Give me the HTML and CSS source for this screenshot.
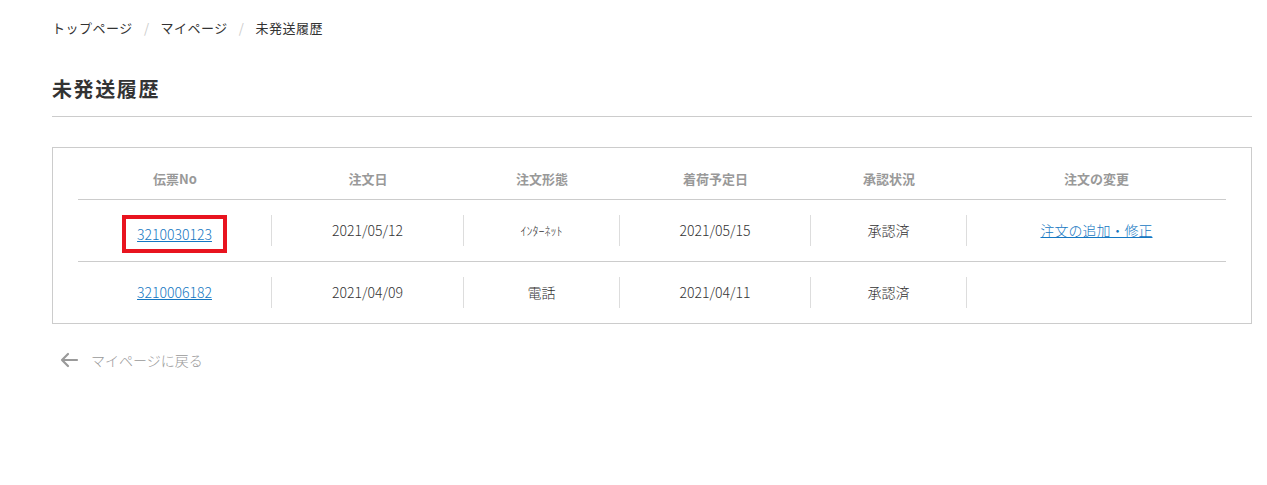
FILE: index.html
```html
<!DOCTYPE html>
<html lang="ja">
  <head>
    <meta charset="UTF-8" />
    <meta name="viewport" content="width=device-width, initial-scale=1.0" />
    <title>未発送履歴</title>
    <link rel="stylesheet" href="styles.css">
  </head>
  <body>
    <div class="container">
      <nav class="breadcrumb">
        <a href="#">トップページ</a>
        <span class="sep">/</span>
        <a href="#">マイページ</a>
        <span class="sep">/</span>
        <span class="current">未発送履歴</span>
      </nav>

      <h1 class="page-title">未発送履歴</h1>

      <div class="table-box">
        <table class="history">
          <thead>
            <tr>
              <th class="c1">伝票No</th>
              <th class="c2">注文日</th>
              <th class="c3">注文形態</th>
              <th class="c4">着荷予定日</th>
              <th class="c5">承認状況</th>
              <th class="c6">注文の変更</th>
            </tr>
          </thead>
          <tbody>
            <tr>
              <td><div class="cell"><a href="#" class="link highlight">3210030123</a></div></td>
              <td><div class="cell">2021/05/12</div></td>
              <td><div class="cell narrow">ｲﾝﾀｰﾈｯﾄ</div></td>
              <td><div class="cell">2021/05/15</div></td>
              <td><div class="cell">承認済</div></td>
              <td><div class="cell last"><a href="#" class="link">注文の追加・修正</a></div></td>
            </tr>
            <tr>
              <td><div class="cell"><a href="#" class="link">3210006182</a></div></td>
              <td><div class="cell">2021/04/09</div></td>
              <td><div class="cell">電話</div></td>
              <td><div class="cell">2021/04/11</div></td>
              <td><div class="cell">承認済</div></td>
              <td><div class="cell last"></div></td>
            </tr>
          </tbody>
        </table>
      </div>

      <a href="#" class="back">
        <svg width="20" height="16" viewBox="0 0 20 16" aria-hidden="true">
          <path d="M18 8H3M9 2L3 8l6 6" fill="none" stroke="#9a9a9a" stroke-width="2.2" stroke-linecap="round" stroke-linejoin="round"/>
        </svg>
        <span>マイページに戻る</span>
      </a>
    </div>
  </body>
</html>
```

FILE: styles.css
```css
body {
  font-family: "Noto Sans CJK JP", "Noto Sans", sans-serif;
  background-color: #ffffff;
  color: #333333;
  margin: 0;
  padding: 0;
}

.container {
  width: 1200px;
  margin: 0 0 0 52px;
  padding-top: 17px;
}

.breadcrumb {
  font-size: 13px;
  line-height: 22px;
  letter-spacing: 0.04em;
  display: flex;
  align-items: center;
  gap: 11px;
}

.breadcrumb a {
  color: #333333;
  text-decoration: none;
}

.breadcrumb .sep {
  color: #cccccc;
}

.page-title {
  font-size: 20px;
  font-weight: bold;
  letter-spacing: 0.08em;
  color: #333333;
  margin: 38px 0 0;
  line-height: 24px;
  padding-bottom: 15px;
  border-bottom: 1px solid #cccccc;
}

.table-box {
  margin-top: 30px;
  border: 1px solid #cccccc;
  padding: 10px 25px 0 25px;
}

.history {
  width: 100%;
  border-collapse: collapse;
  font-size: 13px;
}

.history th {
  color: #999999;
  font-weight: bold;
  line-height: 18px;
  padding: 12px 0 11px;
  border-bottom: 1px solid #cccccc;
  text-align: center;
}

.c1 { width: 194px; }
.c2 { width: 192px; }
.c3 { width: 156px; }
.c4 { width: 191px; }
.c5 { width: 156px; }

.history td {
  padding: 15px 0;
  text-align: center;
}

.history tbody tr:first-child td {
  border-bottom: 1px solid #cccccc;
}

.cell {
  height: 31px;
  line-height: 31px;
  border-right: 1px solid #dddddd;
  color: #333333;
  font-size: 14px;
  font-weight: 300;
}

.cell.last {
  border-right: none;
}

.cell.narrow {
  font-size: 12px;
}

.link {
  color: #1577c2;
  text-decoration: underline;
}

.highlight {
  display: inline-block;
  vertical-align: middle;
  line-height: 22px;
  padding: 4px 11px;
  border: 4px solid #e8141f;
}

.back {
  display: inline-flex;
  align-items: center;
  gap: 12px;
  margin-top: 26px;
  margin-left: 7px;
  font-size: 14px;
  font-weight: 300;
  color: #999999;
  text-decoration: none;
}
```
